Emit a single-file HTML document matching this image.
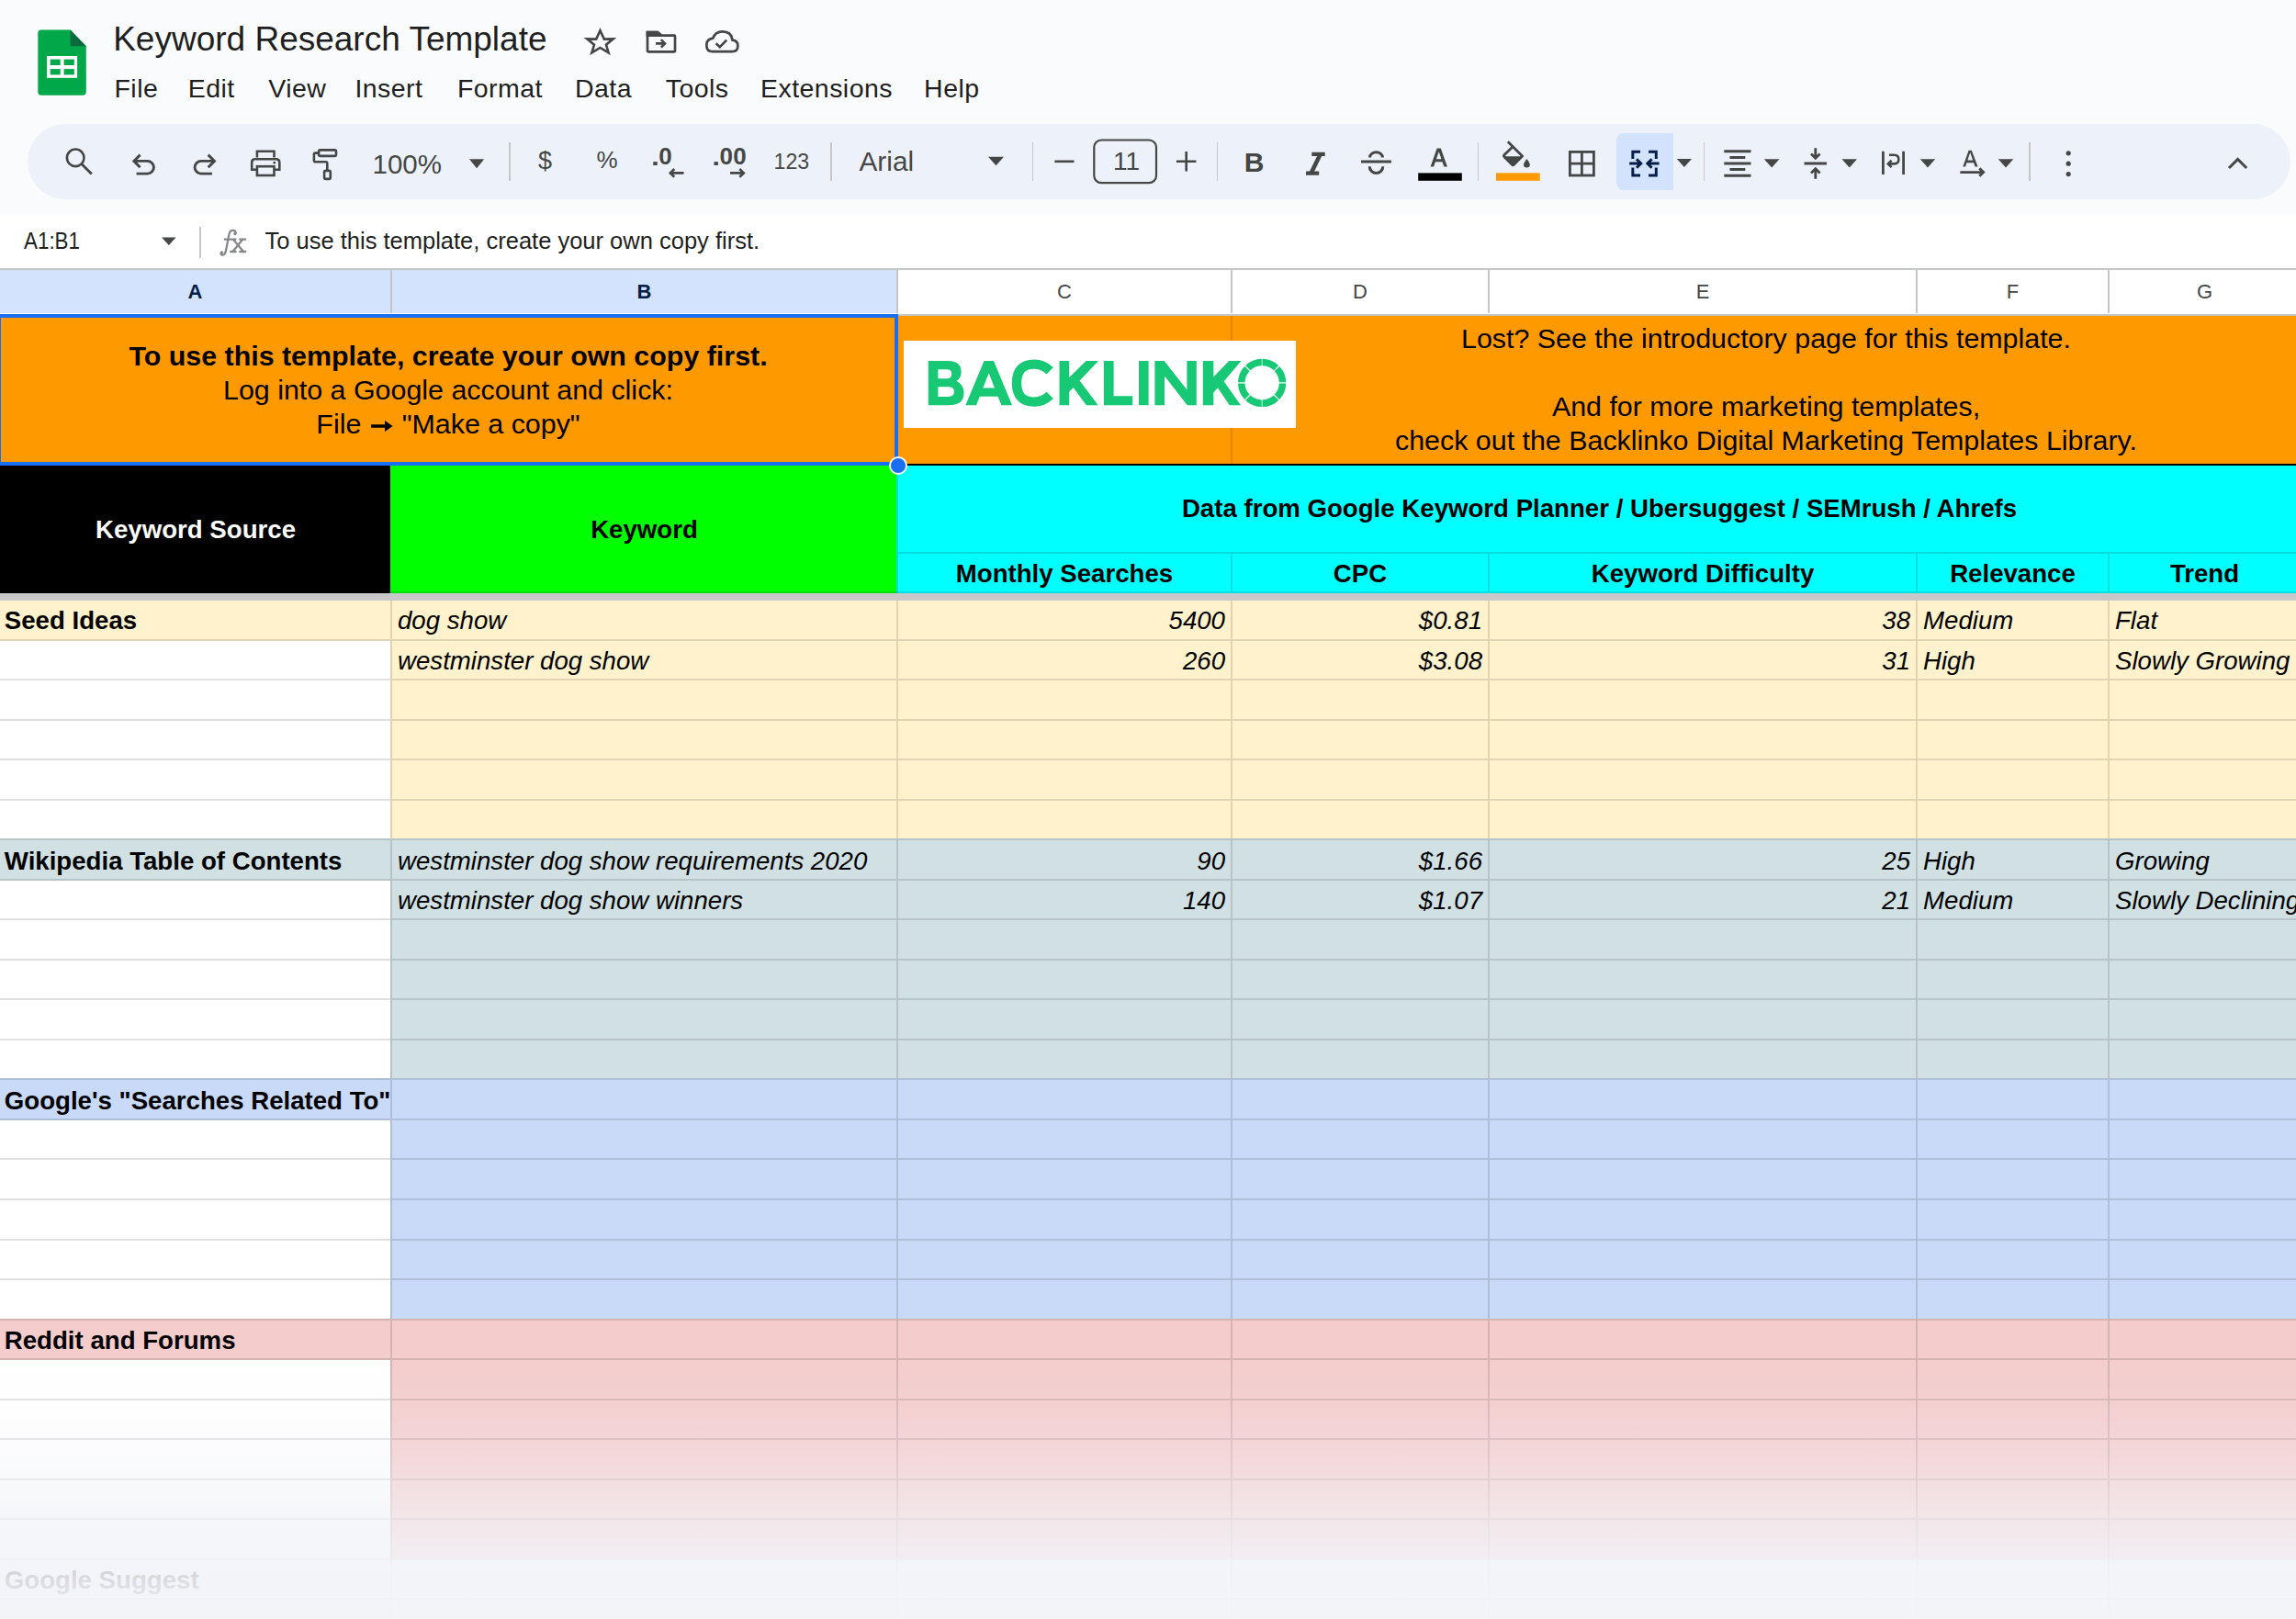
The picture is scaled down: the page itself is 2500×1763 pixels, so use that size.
<!DOCTYPE html>
<html><head><meta charset="utf-8"><title>Keyword Research Template</title>
<style>
html,body{margin:0;padding:0;}
body{width:2500px;height:1763px;overflow:hidden;position:relative;background:#ffffff;font-family:"Liberation Sans", sans-serif;}
body>div,body>svg{position:absolute;}
.t{white-space:nowrap;}
</style></head><body>
<div style="left:0px;top:0px;width:2500px;height:234px;background:#f9fbfd"></div><div style="left:30px;top:135px;width:2464px;height:82px;background:#edf2fa;border-radius:41px"></div><div style="left:0px;top:234px;width:2500px;height:59px;background:#ffffff"></div><svg style="position:absolute;left:0;top:0" width="2500" height="300" viewBox="0 0 2500 300">
<path d="M45 32.6 H76.5 L93.8 50.2 V100 Q93.8 103.7 90 103.7 H45 Q41.3 103.7 41.3 100 V36.3 Q41.3 32.6 45 32.6 Z" fill="#00a84a"/>
<path d="M76.5 32.6 L93.8 50.2 H76.5 Z" fill="#0a6b3d"/>
<rect x="51" y="61" width="33.1" height="23.8" fill="#fff"/>
<rect x="54.7" y="64.6" width="11" height="6.4" fill="#00a84a"/>
<rect x="69.6" y="64.6" width="11.2" height="6.4" fill="#00a84a"/>
<rect x="54.7" y="75.1" width="11" height="6.3" fill="#00a84a"/>
<rect x="69.6" y="75.1" width="11.2" height="6.3" fill="#00a84a"/>
</svg><div class="t" style="left:123.20px;top:21.60px;font-size:37px;line-height:42.55px;color:#1f1f1f">Keyword Research Template</div><div class="t" style="left:124.52px;top:79.94px;font-size:28.5px;line-height:32.77px;color:#1f1f1f;letter-spacing:0.45px">File</div><div class="t" style="left:204.72px;top:79.94px;font-size:28.5px;line-height:32.77px;color:#1f1f1f;letter-spacing:0.45px">Edit</div><div class="t" style="left:292.30px;top:79.94px;font-size:28.5px;line-height:32.77px;color:#1f1f1f;letter-spacing:0.45px">View</div><div class="t" style="left:386.44px;top:79.94px;font-size:28.5px;line-height:32.77px;color:#1f1f1f;letter-spacing:0.45px">Insert</div><div class="t" style="left:497.92px;top:79.94px;font-size:28.5px;line-height:32.77px;color:#1f1f1f;letter-spacing:0.45px">Format</div><div class="t" style="left:626.02px;top:79.94px;font-size:28.5px;line-height:32.77px;color:#1f1f1f;letter-spacing:0.45px">Data</div><div class="t" style="left:724.73px;top:79.94px;font-size:28.5px;line-height:32.77px;color:#1f1f1f;letter-spacing:0.45px">Tools</div><div class="t" style="left:828.02px;top:79.94px;font-size:28.5px;line-height:32.77px;color:#1f1f1f;letter-spacing:0.45px">Extensions</div><div class="t" style="left:1006.12px;top:79.94px;font-size:28.5px;line-height:32.77px;color:#1f1f1f;letter-spacing:0.45px">Help</div><svg style="position:absolute;left:0;top:0" width="1100" height="120" viewBox="0 0 1100 120" fill="none" stroke="#444746" stroke-width="2.7" stroke-linejoin="miter">
<path d="M653.50 33.18 L657.82 42.63 L667.63 42.36 L659.98 48.66 L662.59 57.30 L653.50 51.90 L644.41 57.30 L647.02 48.66 L639.37 42.36 L649.18 42.63 Z" stroke-width="2.6"/>
<path d="M705 35 H716 L720 38.6 H734.9 Q735 38.6 735 40 V55 Q735 56.3 733.6 56.3 H706.4 Q705 56.3 705 55 Z"/>
<path d="M705 35 H716 L720 38.6 H705 Z" fill="#444746"/>
<path d="M714 47.4 H723.5 M719.8 43.2 L724 47.4 L719.8 51.6" stroke-width="2.6"/>
<path d="M776 56.2 H797 Q803.4 56.2 803.4 50 Q803.4 44.2 797.5 43.6 Q796.5 34.4 786.5 34.4 Q779 34.4 776.3 41.6 Q769.3 42.5 769.3 49.2 Q769.3 56.2 776 56.2 Z"/>
<path d="M779.6 47.2 L783.8 51.2 L791.2 43.6" stroke-width="2.7"/>
</svg><svg style="position:absolute;left:0;top:0" width="2500" height="234" viewBox="0 0 2500 234" fill="none" stroke="#444746" stroke-width="2.6">
<circle cx="82.2" cy="171.8" r="9.3"/>
<path d="M88.8 178.5 L99.8 189.6" stroke-width="2.9"/>
<path d="M148.6 189.1 H160.6 A6.85 6.85 0 0 0 160.6 175.4 H146.5" stroke-width="2.9"/>
<path d="M152.6 168.6 L145.8 175.4 L152.6 182.2" stroke-width="2.9"/>
<path d="M230.9 189.1 H218.9 A6.85 6.85 0 0 1 218.9 175.4 H233" stroke-width="2.9"/>
<path d="M226.7 168.6 L233.5 175.4 L226.7 182.2" stroke-width="2.9"/>
<path d="M279.9 171.5 V164.8 H298.5 V171.5"/>
<path d="M279.9 184.8 H274.2 V177 Q274.2 173.3 277.9 173.3 H300.6 Q304.3 173.3 304.3 177 V184.8 H298.5"/>
<rect x="279.9" y="181.2" width="18.6" height="9.8"/>
<circle cx="298.8" cy="177.2" r="1.4" fill="#444746" stroke="none"/>
<rect x="347.1" y="163.4" width="18.9" height="6.5" rx="1.6"/>
<path d="M347 166.6 H343.4 Q341.9 166.6 341.9 168.1 V174.7 Q341.9 176.2 343.4 176.2 H354.7 Q356.3 176.2 356.3 177.8 V185.5"/>
<rect x="353.1" y="185.9" width="6.7" height="9" rx="1.6"/>
<path d="M511 173.2 H527.2 L519.1 183.2 Z" fill="#444746" stroke="none"/>
<path d="M1076 170.8 H1093 L1084.5 180.3 Z" fill="#444746" stroke="none"/>
<path d="M1148.4 175.8 H1169.5"/>
<rect x="1191.3" y="152.5" width="67.7" height="46.7" rx="8" stroke-width="2.2"/>
<path d="M1281 175.8 H1302.4 M1291.7 165 V186.6"/>
<path d="M1825.8 173 H1842 L1833.9 182 Z" fill="#444746" stroke="none"/>
<path d="M1920.8 173.2 H1937.5 L1929.15 182.4 Z" fill="#444746" stroke="none"/>
<path d="M2005.5 173.2 H2022 L2013.75 182.4 Z" fill="#444746" stroke="none"/>
<path d="M2090.8 173.2 H2107.2 L2099 182.4 Z" fill="#444746" stroke="none"/>
<path d="M2175.8 173.2 H2192.3 L2184 182.4 Z" fill="#444746" stroke="none"/>
<path d="M2427 183 L2436.6 173.4 L2446.2 183" stroke-width="2.9"/>
<circle cx="2252.2" cy="166.8" r="2.6" fill="#444746" stroke="none"/>
<circle cx="2252.2" cy="178.2" r="2.6" fill="#444746" stroke="none"/>
<circle cx="2252.2" cy="189.6" r="2.6" fill="#444746" stroke="none"/>
</svg><div style="left:554.25px;top:155.4px;width:1.5px;height:41.4px;background:#c7c7c7"></div><div style="left:904.15px;top:155.4px;width:1.5px;height:41.4px;background:#c7c7c7"></div><div style="left:1123.85px;top:155.4px;width:1.5px;height:41.4px;background:#c7c7c7"></div><div style="left:1324.95px;top:155.4px;width:1.5px;height:41.4px;background:#c7c7c7"></div><div style="left:1608.65px;top:155.4px;width:1.5px;height:41.4px;background:#c7c7c7"></div><div style="left:1854.85px;top:155.4px;width:1.5px;height:41.4px;background:#c7c7c7"></div><div style="left:2209.05px;top:155.4px;width:1.5px;height:41.4px;background:#c7c7c7"></div><div class="t" style="left:405.50px;top:161.72px;font-size:29.5px;line-height:33.92px;color:#444746">100%</div><div class="t" style="left:586.00px;top:160.12px;font-size:27px;line-height:31.05px;color:#444746">$</div><div class="t" style="left:649.50px;top:160.44px;font-size:26px;line-height:29.90px;color:#444746">%</div><div class="t" style="left:935.50px;top:159.14px;font-size:29.8px;line-height:34.27px;color:#444746">Arial</div><div class="t" style="left:1212.00px;top:160.40px;font-size:28px;line-height:32.20px;color:#444746">11</div><div class="t" style="left:842.50px;top:163.02px;font-size:23.2px;line-height:26.68px;color:#444746">123</div><svg style="position:absolute;left:0;top:0" width="2500" height="234" viewBox="0 0 2500 234" fill="none" stroke="#444746" stroke-width="2.6">
<rect x="711.3" y="176.1" width="4.4" height="3.9" fill="#444746" stroke="none"/>
<rect x="777.5" y="176.1" width="4.4" height="3.9" fill="#444746" stroke="none"/>
<path d="M744.5 188.4 H730 M734.3 184 L729.8 188.4 L734.3 192.8" />
<path d="M795 188.4 H809.5 M805.3 184 L809.8 188.4 L805.3 192.8" />
</svg><div class="t" style="left:717.20px;top:156.04px;font-size:26px;line-height:29.90px;color:#444746;font-weight:bold">0</div><div class="t" style="left:783.40px;top:156.04px;font-size:26px;line-height:29.90px;color:#444746;font-weight:bold;letter-spacing:0.3px">00</div><div class="t" style="left:1354.80px;top:160.16px;font-size:30px;line-height:34.50px;color:#444746;font-weight:bold">B</div><svg style="position:absolute;left:0;top:0" width="2500" height="234" viewBox="0 0 2500 234" fill="none" stroke="#444746" stroke-width="2.8">
<path d="M1428.3 167.9 H1442.7 M1422 188.6 H1436.2" stroke-width="4.2"/>
<path d="M1437.6 168 L1427.6 188.5" stroke-width="4.6"/>
<path d="M1482 176.1 H1514.9" stroke-width="3"/>
<path d="M1491.6 171.4 A6.9 5.6 0 0 1 1505.4 171.4" stroke-width="3"/>
<path d="M1491.2 181.2 A7.3 7.3 0 0 0 1505.8 181.2" stroke-width="3"/>
<path d="M1557.6 181.6 L1564.6 161.5 H1568.8 L1575.9 181.6 H1572.3 L1570.5 176.3 H1562.9 L1561.1 181.6 Z M1563.9 173.3 H1569.5 L1566.7 165.3 Z" fill="#444746" fill-rule="evenodd" stroke="none"/>
<rect x="1544.2" y="188.4" width="47.6" height="8.4" fill="#000" stroke="none"/>
<path d="M1641.8 154.2 L1657.6 170 L1648.4 179.2 Q1647.4 180.2 1646.4 179.2 L1637.9 170.7 Q1636.9 169.7 1637.9 168.7 L1647.4 159.6" stroke-width="2.8" stroke-linejoin="round"/>
<path d="M1638.2 170.2 H1657 L1647.4 179.6 Z" fill="#444746" stroke="none"/>
<path d="M1662.4 173 Q1659 177.4 1659 179.2 Q1659 182.4 1662.4 182.4 Q1665.8 182.4 1665.8 179.2 Q1665.8 177.4 1662.4 173 Z" fill="#444746" stroke="none"/>
<rect x="1629" y="188.4" width="47.7" height="8.4" fill="#ff9900" stroke="none"/>
<rect x="1709.4" y="165.4" width="26" height="25.6"/>
<path d="M1722.4 165.4 V191 M1709.4 178.2 H1735.4"/>
</svg><div style="left:1759.6px;top:145.4px;width:62.1px;height:61.6px;background:#d3e3fd;border-radius:8px 0 0 8px"></div><svg style="position:absolute;left:0;top:0" width="2500" height="234" viewBox="0 0 2500 234" fill="none" stroke="#041e49" stroke-width="2.8">
<path d="M1786 165.25 H1777.85 V173.1 M1777.85 182.4 V191.05 H1786" stroke-width="3"/>
<path d="M1795.1 165.25 H1803.3 V173.1 M1803.3 182.4 V191.05 H1795.1" stroke-width="3"/>
<path d="M1774.2 178 H1786 M1782 173.3 L1786.7 178 L1782 182.7" stroke-width="3"/>
<path d="M1806.6 178 H1794.3 M1798.6 173.3 L1793.9 178 L1798.6 182.7" stroke-width="3"/>
</svg><svg style="position:absolute;left:0;top:0" width="2500" height="234" viewBox="0 0 2500 234" fill="none" stroke="#444746" stroke-width="2.8">
<path d="M1877.3 164.8 H1906.5 M1883.5 171.4 H1900.3 M1877.3 178 H1906.5 M1883.5 184.6 H1900.3 M1877.3 191.2 H1906.5" stroke-width="3"/>
<path d="M1964.5 178 H1989 M1976.8 161.2 V172 M1972 167.5 L1976.8 172.3 L1981.6 167.5 M1976.8 194.7 V184 M1972 188.5 L1976.8 183.7 L1981.6 188.5"/>
<path d="M2050.4 164.8 V190 M2072.6 164.8 V190"/>
<path d="M2057 168.8 H2062.5 Q2067.4 168.8 2067.4 173.6 Q2067.4 178.4 2062.5 178.4 H2056.2 M2059.6 174.6 L2055.8 178.4 L2059.6 182.2" stroke-width="2.6"/>
<path d="M2137.3 181.6 L2143.6 163.7 H2146.8 L2153.6 181.6 H2150.6 L2149.1 177.2 H2141.5 L2140 181.6 Z M2142.4 174.6 H2148.2 L2145.2 166 Z" fill="#444746" fill-rule="evenodd" stroke="none"/>
<path d="M2134.4 187.6 H2159.5 M2155.3 183.4 L2159.6 187.6 L2155.3 191.8" stroke-width="2.9"/>
</svg><div class="t" style="left:25.50px;top:247.18px;font-size:26.5px;line-height:30.47px;color:#1f1f1f;transform:scaleX(0.845);transform-origin:0 0">A1:B1</div><svg style="position:absolute;left:0;top:0" width="400" height="300" viewBox="0 0 400 300">
<path d="M176 258.5 H191.6 L183.8 267 Z" fill="#444746"/>
</svg><div style="left:217px;top:246.8px;width:1.6px;height:34.2px;background:#c7c7c7"></div><svg style="position:absolute;left:0;top:0" width="400" height="300" viewBox="0 0 400 300" fill="none" stroke="#858789" stroke-width="2.3">
<path d="M256.4 254.3 Q257.2 250.9 253.4 250.9 Q250.2 250.9 249.3 255.6 L245.9 273.2 Q245 277.7 242.2 277.7 Q240 277.7 240.9 275.2"/>
<circle cx="256" cy="254.5" r="1.7" fill="#858789" stroke="none"/>
<circle cx="241.4" cy="275" r="1.7" fill="#858789" stroke="none"/>
<path d="M243.8 260.6 H257.4 M260.4 260.6 H268.1 M250.3 274 H257.6 M260.4 274 H268.1 M254.2 261 L264.9 273.8 M264 261 L253.6 273.8"/>
</svg><div class="t" style="left:288.50px;top:248.10px;font-size:25.5px;line-height:29.32px;color:#1f1f1f">To use this template, create your own copy first.</div><div style="left:0px;top:292px;width:2500px;height:1.7px;background:#c4c7c5"></div><div style="left:0px;top:293.7px;width:976px;height:47.8px;background:#d3e3fd"></div><div style="left:976px;top:293.7px;width:1524px;height:47.8px;background:#ffffff"></div><div style="left:425px;top:293.7px;width:2px;height:47.8px;background:#c4c7c5"></div><div style="left:976px;top:293.7px;width:2px;height:47.8px;background:#c4c7c5"></div><div style="left:1340px;top:293.7px;width:2px;height:47.8px;background:#c4c7c5"></div><div style="left:1620px;top:293.7px;width:2px;height:47.8px;background:#c4c7c5"></div><div style="left:2086px;top:293.7px;width:2px;height:47.8px;background:#c4c7c5"></div><div style="left:2295px;top:293.7px;width:2px;height:47.8px;background:#c4c7c5"></div><div style="left:976px;top:341.5px;width:1524px;height:2px;background:#c4c7c5"></div><div class="t" style="left:-787.50px;width:2000px;top:304.73px;font-size:22px;line-height:25.30px;text-align:center;color:#041e49;font-weight:bold">A</div><div class="t" style="left:-298.50px;width:2000px;top:304.73px;font-size:22px;line-height:25.30px;text-align:center;color:#041e49;font-weight:bold">B</div><div class="t" style="left:159.00px;width:2000px;top:304.73px;font-size:22px;line-height:25.30px;text-align:center;color:#444746">C</div><div class="t" style="left:481.00px;width:2000px;top:304.73px;font-size:22px;line-height:25.30px;text-align:center;color:#444746">D</div><div class="t" style="left:854.00px;width:2000px;top:304.73px;font-size:22px;line-height:25.30px;text-align:center;color:#444746">E</div><div class="t" style="left:1191.50px;width:2000px;top:304.73px;font-size:22px;line-height:25.30px;text-align:center;color:#444746">F</div><div class="t" style="left:1400.50px;width:2000px;top:304.73px;font-size:22px;line-height:25.30px;text-align:center;color:#444746">G</div><div style="left:0px;top:343.5px;width:2500px;height:161.5px;background:#ff9900"></div><div style="left:976px;top:343.5px;width:1524px;height:0px;"></div><div style="left:1340px;top:343.5px;width:2px;height:161.5px;background:rgba(0,0,0,0.12)"></div><div style="left:976px;top:505px;width:1524px;height:2px;background:#000000"></div><div style="left:984px;top:370.5px;width:427px;height:95.5px;background:#ffffff"></div><svg style="position:absolute;left:0;top:0" width="2500" height="520" viewBox="0 0 2500 520">
<g fill="#17c874" fill-rule="evenodd">
<path d="M1010.8 393 H1032 Q1046.6 393 1046.6 405.2 Q1046.6 411.8 1041.5 415 Q1049.5 418.6 1049.5 428 Q1049.5 441.2 1033.5 441.2 H1010.8 Z M1021.4 402.3 V412.2 H1031 Q1036.3 412.2 1036.3 407.2 Q1036.3 402.3 1031 402.3 Z M1021.4 421.3 V432 H1032.5 Q1039 432 1039 426.6 Q1039 421.3 1032.5 421.3 Z"/>
<path d="M1051.4 441.2 L1071.5 393 H1082 L1102 441.2 H1090.4 L1086.6 431.8 H1066.8 L1063 441.2 Z M1070.3 422.5 H1083 L1076.7 406.3 Z"/>
<path d="M1153.5 393 H1164.2 V411 L1182.6 393 H1196 L1175.6 414.5 L1195.6 441.2 H1182.8 L1168.7 422 L1164.2 426.6 V441.2 H1153.5 Z"/>
<path d="M1201.9 393 H1212.6 V431.2 H1233.2 V441.2 H1201.9 Z"/>
<path d="M1240 393 H1250.6 V441.2 H1240 Z"/>
<path d="M1257.4 393 H1267.6 L1292.4 424.6 V393 H1302.8 V441.2 H1292.8 L1268 409.4 V441.2 H1257.4 Z"/>
<path d="M1309.8 393 H1321.3 V410.5 L1338.3 393 H1351.5 L1332.6 415.2 L1351 441.2 H1338.8 L1325.9 422.2 L1321.3 427.5 V441.2 H1309.8 Z"/>
</g>
<path d="M1143.2 403.8 Q1136 396.6 1126 396.6 Q1107 396.6 1107 417.1 Q1107 437.6 1126 437.6 Q1136 437.6 1143.2 430.4" fill="none" stroke="#17c874" stroke-width="10.4"/>
<circle cx="1374.15" cy="416.9" r="22.4" fill="none" stroke="#17c874" stroke-width="7.5"/>
<path d="M1391.15 416.90 L1401.65 416.90" stroke="#fff" stroke-opacity="0.95" stroke-width="1.3"/><path d="M1386.17 428.92 L1393.60 436.35" stroke="#fff" stroke-opacity="0.95" stroke-width="1.3"/><path d="M1374.15 433.90 L1374.15 444.40" stroke="#fff" stroke-opacity="0.55" stroke-width="1.3"/><path d="M1362.13 428.92 L1354.70 436.35" stroke="#fff" stroke-opacity="0.95" stroke-width="1.3"/><path d="M1357.15 416.90 L1346.65 416.90" stroke="#fff" stroke-opacity="0.95" stroke-width="1.3"/><path d="M1362.13 404.88 L1354.70 397.45" stroke="#fff" stroke-opacity="0.95" stroke-width="1.3"/><path d="M1374.15 399.90 L1374.15 389.40" stroke="#fff" stroke-opacity="0.55" stroke-width="1.3"/><path d="M1386.17 404.88 L1393.60 397.45" stroke="#fff" stroke-opacity="0.95" stroke-width="1.3"/>
</svg><div class="t" style="left:-512px;width:2000px;top:368.6px;font-size:30.4px;line-height:37px;text-align:center;"><b>To use this template, create your own copy first.</b><br>Log into a Google account and click:<br>File <span style="display:inline-block;width:36px;padding-left:2px;box-sizing:border-box;text-align:left"><svg width="24" height="14" viewBox="0 0 24 14" style="vertical-align:1px"><path d="M0 5.2 H15 V1 L23.6 7 L15 13 V8.8 H0 Z" fill="#000"/></svg></span>"Make a copy"</div><div class="t" style="left:923px;width:2000px;top:350.3px;font-size:30.4px;line-height:37px;text-align:center;">Lost? See the introductory page for this template.<br>&nbsp;<br>And for more marketing templates,<br>check out the Backlinko Digital Marketing Templates Library.</div><div style="left:976px;top:507px;width:1524px;height:139px;background:#00ffff"></div><div style="left:978px;top:600.6px;width:1522px;height:2px;background:rgba(0,0,0,0.12)"></div><div style="left:1340px;top:602.6px;width:2px;height:41.4px;background:rgba(0,0,0,0.12)"></div><div style="left:1620px;top:602.6px;width:2px;height:41.4px;background:rgba(0,0,0,0.12)"></div><div style="left:2086px;top:602.6px;width:2px;height:41.4px;background:rgba(0,0,0,0.12)"></div><div style="left:2295px;top:602.6px;width:2px;height:41.4px;background:rgba(0,0,0,0.12)"></div><div style="left:976px;top:507px;width:2px;height:139px;background:rgba(0,0,0,0.12)"></div><div style="left:976px;top:644px;width:1524px;height:2px;background:rgba(0,0,0,0.12)"></div><div style="left:0px;top:507px;width:425px;height:139px;background:#000000"></div><div style="left:425px;top:507px;width:551px;height:139px;background:#00ff00"></div><div style="left:425px;top:644px;width:551px;height:2px;background:rgba(0,0,0,0.12)"></div><div class="t" style="left:-787.00px;width:2000px;top:560.73px;font-size:27.64px;line-height:31.79px;text-align:center;color:#ffffff;font-weight:bold">Keyword Source</div><div class="t" style="left:-298.50px;width:2000px;top:560.73px;font-size:27.64px;line-height:31.79px;text-align:center;color:#000;font-weight:bold">Keyword</div><div class="t" style="left:741.50px;width:2000px;top:537.73px;font-size:27.64px;line-height:31.79px;text-align:center;color:#000;font-weight:bold">Data from Google Keyword Planner / Ubersuggest / SEMrush / Ahrefs</div><div class="t" style="left:159.00px;width:2000px;top:609.03px;font-size:27.64px;line-height:31.79px;text-align:center;color:#000;font-weight:bold">Monthly Searches</div><div class="t" style="left:481.00px;width:2000px;top:609.03px;font-size:27.64px;line-height:31.79px;text-align:center;color:#000;font-weight:bold">CPC</div><div class="t" style="left:854.00px;width:2000px;top:609.03px;font-size:27.64px;line-height:31.79px;text-align:center;color:#000;font-weight:bold">Keyword Difficulty</div><div class="t" style="left:1191.50px;width:2000px;top:609.03px;font-size:27.64px;line-height:31.79px;text-align:center;color:#000;font-weight:bold">Relevance</div><div class="t" style="left:1400.50px;width:2000px;top:609.03px;font-size:27.64px;line-height:31.79px;text-align:center;color:#000;font-weight:bold">Trend</div><div style="left:0px;top:646px;width:2500px;height:8px;background:#c8c8c8"></div><div style="left:425px;top:654px;width:2075px;height:41.60000000000002px;background:#fff2cc"></div><div style="left:0px;top:654px;width:425px;height:43.60000000000002px;background:#fff2cc"></div><div style="left:425px;top:695.6px;width:2075px;height:43.52999999999997px;background:#fff2cc"></div><div style="left:0px;top:697.6px;width:425px;height:41.52999999999997px;background:#ffffff"></div><div style="left:425px;top:739.13px;width:2075px;height:43.530000000000086px;background:#fff2cc"></div><div style="left:0px;top:739.13px;width:425px;height:43.530000000000086px;background:#ffffff"></div><div style="left:425px;top:782.6600000000001px;width:2075px;height:43.52999999999997px;background:#fff2cc"></div><div style="left:0px;top:782.6600000000001px;width:425px;height:43.52999999999997px;background:#ffffff"></div><div style="left:425px;top:826.19px;width:2075px;height:43.52999999999997px;background:#fff2cc"></div><div style="left:0px;top:826.19px;width:425px;height:43.52999999999997px;background:#ffffff"></div><div style="left:425px;top:869.72px;width:2075px;height:43.52999999999997px;background:#fff2cc"></div><div style="left:0px;top:869.72px;width:425px;height:43.52999999999997px;background:#ffffff"></div><div style="left:425px;top:913.25px;width:2075px;height:43.52999999999997px;background:#d0e0e3"></div><div style="left:0px;top:913.25px;width:425px;height:45.52999999999997px;background:#d0e0e3"></div><div style="left:425px;top:956.78px;width:2075px;height:43.530000000000086px;background:#d0e0e3"></div><div style="left:0px;top:958.78px;width:425px;height:41.530000000000086px;background:#ffffff"></div><div style="left:425px;top:1000.3100000000001px;width:2075px;height:43.530000000000086px;background:#d0e0e3"></div><div style="left:0px;top:1000.3100000000001px;width:425px;height:43.530000000000086px;background:#ffffff"></div><div style="left:425px;top:1043.8400000000001px;width:2075px;height:43.529999999999745px;background:#d0e0e3"></div><div style="left:0px;top:1043.8400000000001px;width:425px;height:43.529999999999745px;background:#ffffff"></div><div style="left:425px;top:1087.37px;width:2075px;height:43.5300000000002px;background:#d0e0e3"></div><div style="left:0px;top:1087.37px;width:425px;height:43.5300000000002px;background:#ffffff"></div><div style="left:425px;top:1130.9px;width:2075px;height:43.52999999999997px;background:#d0e0e3"></div><div style="left:0px;top:1130.9px;width:425px;height:43.52999999999997px;background:#ffffff"></div><div style="left:425px;top:1174.43px;width:2075px;height:43.52999999999997px;background:#c9daf8"></div><div style="left:0px;top:1174.43px;width:425px;height:45.52999999999997px;background:#c9daf8"></div><div style="left:425px;top:1217.96px;width:2075px;height:43.52999999999997px;background:#c9daf8"></div><div style="left:0px;top:1219.96px;width:425px;height:41.52999999999997px;background:#ffffff"></div><div style="left:425px;top:1261.49px;width:2075px;height:43.52999999999997px;background:#c9daf8"></div><div style="left:0px;top:1261.49px;width:425px;height:43.52999999999997px;background:#ffffff"></div><div style="left:425px;top:1305.02px;width:2075px;height:43.5300000000002px;background:#c9daf8"></div><div style="left:0px;top:1305.02px;width:425px;height:43.5300000000002px;background:#ffffff"></div><div style="left:425px;top:1348.5500000000002px;width:2075px;height:43.529999999999745px;background:#c9daf8"></div><div style="left:0px;top:1348.5500000000002px;width:425px;height:43.529999999999745px;background:#ffffff"></div><div style="left:425px;top:1392.08px;width:2075px;height:43.5300000000002px;background:#c9daf8"></div><div style="left:0px;top:1392.08px;width:425px;height:43.5300000000002px;background:#ffffff"></div><div style="left:425px;top:1435.6100000000001px;width:2075px;height:43.529999999999745px;background:#f4cccc"></div><div style="left:0px;top:1435.6100000000001px;width:425px;height:45.529999999999745px;background:#f4cccc"></div><div style="left:425px;top:1479.1399999999999px;width:2075px;height:43.5300000000002px;background:#f4cccc"></div><div style="left:0px;top:1481.1399999999999px;width:425px;height:41.5300000000002px;background:#ffffff"></div><div style="left:425px;top:1522.67px;width:2075px;height:43.52999999999997px;background:#f4cccc"></div><div style="left:0px;top:1522.67px;width:425px;height:43.52999999999997px;background:#ffffff"></div><div style="left:425px;top:1566.2px;width:2075px;height:43.52999999999997px;background:#f4cccc"></div><div style="left:0px;top:1566.2px;width:425px;height:43.52999999999997px;background:#ffffff"></div><div style="left:425px;top:1609.73px;width:2075px;height:43.5300000000002px;background:#f4cccc"></div><div style="left:0px;top:1609.73px;width:425px;height:43.5300000000002px;background:#ffffff"></div><div style="left:425px;top:1653.2600000000002px;width:2075px;height:43.529999999999745px;background:#f4cccc"></div><div style="left:0px;top:1653.2600000000002px;width:425px;height:43.529999999999745px;background:#ffffff"></div><div style="left:0px;top:1696.79px;width:2500px;height:43.5300000000002px;background:#ffffff"></div><div style="left:0px;top:1740.3200000000002px;width:2500px;height:22.679999999999836px;background:#ffffff"></div><div style="left:0px;top:695.6px;width:2500px;height:2px;background:rgba(0,0,0,0.12)"></div><div style="left:0px;top:739.13px;width:2500px;height:2px;background:rgba(0,0,0,0.12)"></div><div style="left:0px;top:782.6600000000001px;width:2500px;height:2px;background:rgba(0,0,0,0.12)"></div><div style="left:0px;top:826.19px;width:2500px;height:2px;background:rgba(0,0,0,0.12)"></div><div style="left:0px;top:869.72px;width:2500px;height:2px;background:rgba(0,0,0,0.12)"></div><div style="left:0px;top:913.25px;width:2500px;height:2px;background:rgba(0,0,0,0.12)"></div><div style="left:0px;top:956.78px;width:2500px;height:2px;background:rgba(0,0,0,0.12)"></div><div style="left:0px;top:1000.3100000000001px;width:2500px;height:2px;background:rgba(0,0,0,0.12)"></div><div style="left:0px;top:1043.8400000000001px;width:2500px;height:2px;background:rgba(0,0,0,0.12)"></div><div style="left:0px;top:1087.37px;width:2500px;height:2px;background:rgba(0,0,0,0.12)"></div><div style="left:0px;top:1130.9px;width:2500px;height:2px;background:rgba(0,0,0,0.12)"></div><div style="left:0px;top:1174.43px;width:2500px;height:2px;background:rgba(0,0,0,0.12)"></div><div style="left:0px;top:1217.96px;width:2500px;height:2px;background:rgba(0,0,0,0.12)"></div><div style="left:0px;top:1261.49px;width:2500px;height:2px;background:rgba(0,0,0,0.12)"></div><div style="left:0px;top:1305.02px;width:2500px;height:2px;background:rgba(0,0,0,0.12)"></div><div style="left:0px;top:1348.5500000000002px;width:2500px;height:2px;background:rgba(0,0,0,0.12)"></div><div style="left:0px;top:1392.08px;width:2500px;height:2px;background:rgba(0,0,0,0.12)"></div><div style="left:0px;top:1435.6100000000001px;width:2500px;height:2px;background:rgba(0,0,0,0.12)"></div><div style="left:0px;top:1479.1399999999999px;width:2500px;height:2px;background:rgba(0,0,0,0.12)"></div><div style="left:0px;top:1522.67px;width:2500px;height:2px;background:rgba(0,0,0,0.12)"></div><div style="left:0px;top:1566.2px;width:2500px;height:2px;background:rgba(0,0,0,0.12)"></div><div style="left:0px;top:1609.73px;width:2500px;height:2px;background:rgba(0,0,0,0.12)"></div><div style="left:0px;top:1653.2600000000002px;width:2500px;height:2px;background:rgba(0,0,0,0.12)"></div><div style="left:0px;top:1696.79px;width:2500px;height:2px;background:rgba(0,0,0,0.12)"></div><div style="left:0px;top:1740.3200000000002px;width:2500px;height:2px;background:rgba(0,0,0,0.12)"></div><div style="left:425px;top:654px;width:2px;height:41.60000000000002px;background:rgba(0,0,0,0.12)"></div><div style="left:425px;top:697.6px;width:2px;height:41.52999999999997px;background:rgba(0,0,0,0.12)"></div><div style="left:425px;top:741.13px;width:2px;height:41.530000000000086px;background:rgba(0,0,0,0.12)"></div><div style="left:425px;top:784.6600000000001px;width:2px;height:41.52999999999997px;background:rgba(0,0,0,0.12)"></div><div style="left:425px;top:828.19px;width:2px;height:41.52999999999997px;background:rgba(0,0,0,0.12)"></div><div style="left:425px;top:871.72px;width:2px;height:41.52999999999997px;background:rgba(0,0,0,0.12)"></div><div style="left:425px;top:915.25px;width:2px;height:41.52999999999997px;background:rgba(0,0,0,0.12)"></div><div style="left:425px;top:958.78px;width:2px;height:41.530000000000086px;background:rgba(0,0,0,0.12)"></div><div style="left:425px;top:1002.3100000000001px;width:2px;height:41.530000000000086px;background:rgba(0,0,0,0.12)"></div><div style="left:425px;top:1045.8400000000001px;width:2px;height:41.529999999999745px;background:rgba(0,0,0,0.12)"></div><div style="left:425px;top:1089.37px;width:2px;height:41.5300000000002px;background:rgba(0,0,0,0.12)"></div><div style="left:425px;top:1132.9px;width:2px;height:41.52999999999997px;background:rgba(0,0,0,0.12)"></div><div style="left:425px;top:1176.43px;width:2px;height:41.52999999999997px;background:rgba(0,0,0,0.12)"></div><div style="left:425px;top:1219.96px;width:2px;height:41.52999999999997px;background:rgba(0,0,0,0.12)"></div><div style="left:425px;top:1263.49px;width:2px;height:41.52999999999997px;background:rgba(0,0,0,0.12)"></div><div style="left:425px;top:1307.02px;width:2px;height:41.5300000000002px;background:rgba(0,0,0,0.12)"></div><div style="left:425px;top:1350.5500000000002px;width:2px;height:41.529999999999745px;background:rgba(0,0,0,0.12)"></div><div style="left:425px;top:1394.08px;width:2px;height:41.5300000000002px;background:rgba(0,0,0,0.12)"></div><div style="left:425px;top:1437.6100000000001px;width:2px;height:41.529999999999745px;background:rgba(0,0,0,0.12)"></div><div style="left:425px;top:1481.1399999999999px;width:2px;height:41.5300000000002px;background:rgba(0,0,0,0.12)"></div><div style="left:425px;top:1524.67px;width:2px;height:41.52999999999997px;background:rgba(0,0,0,0.12)"></div><div style="left:425px;top:1568.2px;width:2px;height:41.52999999999997px;background:rgba(0,0,0,0.12)"></div><div style="left:425px;top:1611.73px;width:2px;height:41.5300000000002px;background:rgba(0,0,0,0.12)"></div><div style="left:425px;top:1655.2600000000002px;width:2px;height:41.529999999999745px;background:rgba(0,0,0,0.12)"></div><div style="left:425px;top:1698.79px;width:2px;height:41.5300000000002px;background:rgba(0,0,0,0.12)"></div><div style="left:425px;top:1742.3200000000002px;width:2px;height:20.679999999999836px;background:rgba(0,0,0,0.12)"></div><div style="left:976px;top:654px;width:2px;height:41.60000000000002px;background:rgba(0,0,0,0.12)"></div><div style="left:976px;top:697.6px;width:2px;height:41.52999999999997px;background:rgba(0,0,0,0.12)"></div><div style="left:976px;top:741.13px;width:2px;height:41.530000000000086px;background:rgba(0,0,0,0.12)"></div><div style="left:976px;top:784.6600000000001px;width:2px;height:41.52999999999997px;background:rgba(0,0,0,0.12)"></div><div style="left:976px;top:828.19px;width:2px;height:41.52999999999997px;background:rgba(0,0,0,0.12)"></div><div style="left:976px;top:871.72px;width:2px;height:41.52999999999997px;background:rgba(0,0,0,0.12)"></div><div style="left:976px;top:915.25px;width:2px;height:41.52999999999997px;background:rgba(0,0,0,0.12)"></div><div style="left:976px;top:958.78px;width:2px;height:41.530000000000086px;background:rgba(0,0,0,0.12)"></div><div style="left:976px;top:1002.3100000000001px;width:2px;height:41.530000000000086px;background:rgba(0,0,0,0.12)"></div><div style="left:976px;top:1045.8400000000001px;width:2px;height:41.529999999999745px;background:rgba(0,0,0,0.12)"></div><div style="left:976px;top:1089.37px;width:2px;height:41.5300000000002px;background:rgba(0,0,0,0.12)"></div><div style="left:976px;top:1132.9px;width:2px;height:41.52999999999997px;background:rgba(0,0,0,0.12)"></div><div style="left:976px;top:1176.43px;width:2px;height:41.52999999999997px;background:rgba(0,0,0,0.12)"></div><div style="left:976px;top:1219.96px;width:2px;height:41.52999999999997px;background:rgba(0,0,0,0.12)"></div><div style="left:976px;top:1263.49px;width:2px;height:41.52999999999997px;background:rgba(0,0,0,0.12)"></div><div style="left:976px;top:1307.02px;width:2px;height:41.5300000000002px;background:rgba(0,0,0,0.12)"></div><div style="left:976px;top:1350.5500000000002px;width:2px;height:41.529999999999745px;background:rgba(0,0,0,0.12)"></div><div style="left:976px;top:1394.08px;width:2px;height:41.5300000000002px;background:rgba(0,0,0,0.12)"></div><div style="left:976px;top:1437.6100000000001px;width:2px;height:41.529999999999745px;background:rgba(0,0,0,0.12)"></div><div style="left:976px;top:1481.1399999999999px;width:2px;height:41.5300000000002px;background:rgba(0,0,0,0.12)"></div><div style="left:976px;top:1524.67px;width:2px;height:41.52999999999997px;background:rgba(0,0,0,0.12)"></div><div style="left:976px;top:1568.2px;width:2px;height:41.52999999999997px;background:rgba(0,0,0,0.12)"></div><div style="left:976px;top:1611.73px;width:2px;height:41.5300000000002px;background:rgba(0,0,0,0.12)"></div><div style="left:976px;top:1655.2600000000002px;width:2px;height:41.529999999999745px;background:rgba(0,0,0,0.12)"></div><div style="left:976px;top:1698.79px;width:2px;height:41.5300000000002px;background:rgba(0,0,0,0.12)"></div><div style="left:976px;top:1742.3200000000002px;width:2px;height:20.679999999999836px;background:rgba(0,0,0,0.12)"></div><div style="left:1340px;top:654px;width:2px;height:41.60000000000002px;background:rgba(0,0,0,0.12)"></div><div style="left:1340px;top:697.6px;width:2px;height:41.52999999999997px;background:rgba(0,0,0,0.12)"></div><div style="left:1340px;top:741.13px;width:2px;height:41.530000000000086px;background:rgba(0,0,0,0.12)"></div><div style="left:1340px;top:784.6600000000001px;width:2px;height:41.52999999999997px;background:rgba(0,0,0,0.12)"></div><div style="left:1340px;top:828.19px;width:2px;height:41.52999999999997px;background:rgba(0,0,0,0.12)"></div><div style="left:1340px;top:871.72px;width:2px;height:41.52999999999997px;background:rgba(0,0,0,0.12)"></div><div style="left:1340px;top:915.25px;width:2px;height:41.52999999999997px;background:rgba(0,0,0,0.12)"></div><div style="left:1340px;top:958.78px;width:2px;height:41.530000000000086px;background:rgba(0,0,0,0.12)"></div><div style="left:1340px;top:1002.3100000000001px;width:2px;height:41.530000000000086px;background:rgba(0,0,0,0.12)"></div><div style="left:1340px;top:1045.8400000000001px;width:2px;height:41.529999999999745px;background:rgba(0,0,0,0.12)"></div><div style="left:1340px;top:1089.37px;width:2px;height:41.5300000000002px;background:rgba(0,0,0,0.12)"></div><div style="left:1340px;top:1132.9px;width:2px;height:41.52999999999997px;background:rgba(0,0,0,0.12)"></div><div style="left:1340px;top:1176.43px;width:2px;height:41.52999999999997px;background:rgba(0,0,0,0.12)"></div><div style="left:1340px;top:1219.96px;width:2px;height:41.52999999999997px;background:rgba(0,0,0,0.12)"></div><div style="left:1340px;top:1263.49px;width:2px;height:41.52999999999997px;background:rgba(0,0,0,0.12)"></div><div style="left:1340px;top:1307.02px;width:2px;height:41.5300000000002px;background:rgba(0,0,0,0.12)"></div><div style="left:1340px;top:1350.5500000000002px;width:2px;height:41.529999999999745px;background:rgba(0,0,0,0.12)"></div><div style="left:1340px;top:1394.08px;width:2px;height:41.5300000000002px;background:rgba(0,0,0,0.12)"></div><div style="left:1340px;top:1437.6100000000001px;width:2px;height:41.529999999999745px;background:rgba(0,0,0,0.12)"></div><div style="left:1340px;top:1481.1399999999999px;width:2px;height:41.5300000000002px;background:rgba(0,0,0,0.12)"></div><div style="left:1340px;top:1524.67px;width:2px;height:41.52999999999997px;background:rgba(0,0,0,0.12)"></div><div style="left:1340px;top:1568.2px;width:2px;height:41.52999999999997px;background:rgba(0,0,0,0.12)"></div><div style="left:1340px;top:1611.73px;width:2px;height:41.5300000000002px;background:rgba(0,0,0,0.12)"></div><div style="left:1340px;top:1655.2600000000002px;width:2px;height:41.529999999999745px;background:rgba(0,0,0,0.12)"></div><div style="left:1340px;top:1698.79px;width:2px;height:41.5300000000002px;background:rgba(0,0,0,0.12)"></div><div style="left:1340px;top:1742.3200000000002px;width:2px;height:20.679999999999836px;background:rgba(0,0,0,0.12)"></div><div style="left:1620px;top:654px;width:2px;height:41.60000000000002px;background:rgba(0,0,0,0.12)"></div><div style="left:1620px;top:697.6px;width:2px;height:41.52999999999997px;background:rgba(0,0,0,0.12)"></div><div style="left:1620px;top:741.13px;width:2px;height:41.530000000000086px;background:rgba(0,0,0,0.12)"></div><div style="left:1620px;top:784.6600000000001px;width:2px;height:41.52999999999997px;background:rgba(0,0,0,0.12)"></div><div style="left:1620px;top:828.19px;width:2px;height:41.52999999999997px;background:rgba(0,0,0,0.12)"></div><div style="left:1620px;top:871.72px;width:2px;height:41.52999999999997px;background:rgba(0,0,0,0.12)"></div><div style="left:1620px;top:915.25px;width:2px;height:41.52999999999997px;background:rgba(0,0,0,0.12)"></div><div style="left:1620px;top:958.78px;width:2px;height:41.530000000000086px;background:rgba(0,0,0,0.12)"></div><div style="left:1620px;top:1002.3100000000001px;width:2px;height:41.530000000000086px;background:rgba(0,0,0,0.12)"></div><div style="left:1620px;top:1045.8400000000001px;width:2px;height:41.529999999999745px;background:rgba(0,0,0,0.12)"></div><div style="left:1620px;top:1089.37px;width:2px;height:41.5300000000002px;background:rgba(0,0,0,0.12)"></div><div style="left:1620px;top:1132.9px;width:2px;height:41.52999999999997px;background:rgba(0,0,0,0.12)"></div><div style="left:1620px;top:1176.43px;width:2px;height:41.52999999999997px;background:rgba(0,0,0,0.12)"></div><div style="left:1620px;top:1219.96px;width:2px;height:41.52999999999997px;background:rgba(0,0,0,0.12)"></div><div style="left:1620px;top:1263.49px;width:2px;height:41.52999999999997px;background:rgba(0,0,0,0.12)"></div><div style="left:1620px;top:1307.02px;width:2px;height:41.5300000000002px;background:rgba(0,0,0,0.12)"></div><div style="left:1620px;top:1350.5500000000002px;width:2px;height:41.529999999999745px;background:rgba(0,0,0,0.12)"></div><div style="left:1620px;top:1394.08px;width:2px;height:41.5300000000002px;background:rgba(0,0,0,0.12)"></div><div style="left:1620px;top:1437.6100000000001px;width:2px;height:41.529999999999745px;background:rgba(0,0,0,0.12)"></div><div style="left:1620px;top:1481.1399999999999px;width:2px;height:41.5300000000002px;background:rgba(0,0,0,0.12)"></div><div style="left:1620px;top:1524.67px;width:2px;height:41.52999999999997px;background:rgba(0,0,0,0.12)"></div><div style="left:1620px;top:1568.2px;width:2px;height:41.52999999999997px;background:rgba(0,0,0,0.12)"></div><div style="left:1620px;top:1611.73px;width:2px;height:41.5300000000002px;background:rgba(0,0,0,0.12)"></div><div style="left:1620px;top:1655.2600000000002px;width:2px;height:41.529999999999745px;background:rgba(0,0,0,0.12)"></div><div style="left:1620px;top:1698.79px;width:2px;height:41.5300000000002px;background:rgba(0,0,0,0.12)"></div><div style="left:1620px;top:1742.3200000000002px;width:2px;height:20.679999999999836px;background:rgba(0,0,0,0.12)"></div><div style="left:2086px;top:654px;width:2px;height:41.60000000000002px;background:rgba(0,0,0,0.12)"></div><div style="left:2086px;top:697.6px;width:2px;height:41.52999999999997px;background:rgba(0,0,0,0.12)"></div><div style="left:2086px;top:741.13px;width:2px;height:41.530000000000086px;background:rgba(0,0,0,0.12)"></div><div style="left:2086px;top:784.6600000000001px;width:2px;height:41.52999999999997px;background:rgba(0,0,0,0.12)"></div><div style="left:2086px;top:828.19px;width:2px;height:41.52999999999997px;background:rgba(0,0,0,0.12)"></div><div style="left:2086px;top:871.72px;width:2px;height:41.52999999999997px;background:rgba(0,0,0,0.12)"></div><div style="left:2086px;top:915.25px;width:2px;height:41.52999999999997px;background:rgba(0,0,0,0.12)"></div><div style="left:2086px;top:958.78px;width:2px;height:41.530000000000086px;background:rgba(0,0,0,0.12)"></div><div style="left:2086px;top:1002.3100000000001px;width:2px;height:41.530000000000086px;background:rgba(0,0,0,0.12)"></div><div style="left:2086px;top:1045.8400000000001px;width:2px;height:41.529999999999745px;background:rgba(0,0,0,0.12)"></div><div style="left:2086px;top:1089.37px;width:2px;height:41.5300000000002px;background:rgba(0,0,0,0.12)"></div><div style="left:2086px;top:1132.9px;width:2px;height:41.52999999999997px;background:rgba(0,0,0,0.12)"></div><div style="left:2086px;top:1176.43px;width:2px;height:41.52999999999997px;background:rgba(0,0,0,0.12)"></div><div style="left:2086px;top:1219.96px;width:2px;height:41.52999999999997px;background:rgba(0,0,0,0.12)"></div><div style="left:2086px;top:1263.49px;width:2px;height:41.52999999999997px;background:rgba(0,0,0,0.12)"></div><div style="left:2086px;top:1307.02px;width:2px;height:41.5300000000002px;background:rgba(0,0,0,0.12)"></div><div style="left:2086px;top:1350.5500000000002px;width:2px;height:41.529999999999745px;background:rgba(0,0,0,0.12)"></div><div style="left:2086px;top:1394.08px;width:2px;height:41.5300000000002px;background:rgba(0,0,0,0.12)"></div><div style="left:2086px;top:1437.6100000000001px;width:2px;height:41.529999999999745px;background:rgba(0,0,0,0.12)"></div><div style="left:2086px;top:1481.1399999999999px;width:2px;height:41.5300000000002px;background:rgba(0,0,0,0.12)"></div><div style="left:2086px;top:1524.67px;width:2px;height:41.52999999999997px;background:rgba(0,0,0,0.12)"></div><div style="left:2086px;top:1568.2px;width:2px;height:41.52999999999997px;background:rgba(0,0,0,0.12)"></div><div style="left:2086px;top:1611.73px;width:2px;height:41.5300000000002px;background:rgba(0,0,0,0.12)"></div><div style="left:2086px;top:1655.2600000000002px;width:2px;height:41.529999999999745px;background:rgba(0,0,0,0.12)"></div><div style="left:2086px;top:1698.79px;width:2px;height:41.5300000000002px;background:rgba(0,0,0,0.12)"></div><div style="left:2086px;top:1742.3200000000002px;width:2px;height:20.679999999999836px;background:rgba(0,0,0,0.12)"></div><div style="left:2295px;top:654px;width:2px;height:41.60000000000002px;background:rgba(0,0,0,0.12)"></div><div style="left:2295px;top:697.6px;width:2px;height:41.52999999999997px;background:rgba(0,0,0,0.12)"></div><div style="left:2295px;top:741.13px;width:2px;height:41.530000000000086px;background:rgba(0,0,0,0.12)"></div><div style="left:2295px;top:784.6600000000001px;width:2px;height:41.52999999999997px;background:rgba(0,0,0,0.12)"></div><div style="left:2295px;top:828.19px;width:2px;height:41.52999999999997px;background:rgba(0,0,0,0.12)"></div><div style="left:2295px;top:871.72px;width:2px;height:41.52999999999997px;background:rgba(0,0,0,0.12)"></div><div style="left:2295px;top:915.25px;width:2px;height:41.52999999999997px;background:rgba(0,0,0,0.12)"></div><div style="left:2295px;top:958.78px;width:2px;height:41.530000000000086px;background:rgba(0,0,0,0.12)"></div><div style="left:2295px;top:1002.3100000000001px;width:2px;height:41.530000000000086px;background:rgba(0,0,0,0.12)"></div><div style="left:2295px;top:1045.8400000000001px;width:2px;height:41.529999999999745px;background:rgba(0,0,0,0.12)"></div><div style="left:2295px;top:1089.37px;width:2px;height:41.5300000000002px;background:rgba(0,0,0,0.12)"></div><div style="left:2295px;top:1132.9px;width:2px;height:41.52999999999997px;background:rgba(0,0,0,0.12)"></div><div style="left:2295px;top:1176.43px;width:2px;height:41.52999999999997px;background:rgba(0,0,0,0.12)"></div><div style="left:2295px;top:1219.96px;width:2px;height:41.52999999999997px;background:rgba(0,0,0,0.12)"></div><div style="left:2295px;top:1263.49px;width:2px;height:41.52999999999997px;background:rgba(0,0,0,0.12)"></div><div style="left:2295px;top:1307.02px;width:2px;height:41.5300000000002px;background:rgba(0,0,0,0.12)"></div><div style="left:2295px;top:1350.5500000000002px;width:2px;height:41.529999999999745px;background:rgba(0,0,0,0.12)"></div><div style="left:2295px;top:1394.08px;width:2px;height:41.5300000000002px;background:rgba(0,0,0,0.12)"></div><div style="left:2295px;top:1437.6100000000001px;width:2px;height:41.529999999999745px;background:rgba(0,0,0,0.12)"></div><div style="left:2295px;top:1481.1399999999999px;width:2px;height:41.5300000000002px;background:rgba(0,0,0,0.12)"></div><div style="left:2295px;top:1524.67px;width:2px;height:41.52999999999997px;background:rgba(0,0,0,0.12)"></div><div style="left:2295px;top:1568.2px;width:2px;height:41.52999999999997px;background:rgba(0,0,0,0.12)"></div><div style="left:2295px;top:1611.73px;width:2px;height:41.5300000000002px;background:rgba(0,0,0,0.12)"></div><div style="left:2295px;top:1655.2600000000002px;width:2px;height:41.529999999999745px;background:rgba(0,0,0,0.12)"></div><div style="left:2295px;top:1698.79px;width:2px;height:41.5300000000002px;background:rgba(0,0,0,0.12)"></div><div style="left:2295px;top:1742.3200000000002px;width:2px;height:20.679999999999836px;background:rgba(0,0,0,0.12)"></div><div class="t" style="left:4.80px;top:660.33px;font-size:27.64px;line-height:31.79px;color:#000;font-weight:bold">Seed Ideas</div><div class="t" style="left:4.80px;top:921.51px;font-size:27.64px;line-height:31.79px;color:#000;font-weight:bold">Wikipedia Table of Contents</div><div class="t" style="left:4.80px;top:1182.69px;font-size:27.64px;line-height:31.79px;color:#000;font-weight:bold">Google's "Searches Related To"</div><div class="t" style="left:4.80px;top:1443.87px;font-size:27.64px;line-height:31.79px;color:#000;font-weight:bold">Reddit and Forums</div><div class="t" style="left:4.80px;top:1705.05px;font-size:27.64px;line-height:31.79px;color:#000;font-weight:bold">Google Suggest</div><div class="t" style="left:433.00px;top:660.33px;font-size:27.64px;line-height:31.79px;color:#000;font-style:italic">dog show</div><div class="t" style="right:1166.00px;top:660.33px;font-size:27.64px;line-height:31.79px;text-align:right;color:#000;font-style:italic">5400</div><div class="t" style="right:886.00px;top:660.33px;font-size:27.64px;line-height:31.79px;text-align:right;color:#000;font-style:italic">$0.81</div><div class="t" style="right:420.00px;top:660.33px;font-size:27.64px;line-height:31.79px;text-align:right;color:#000;font-style:italic">38</div><div class="t" style="left:2094.00px;top:660.33px;font-size:27.64px;line-height:31.79px;color:#000;font-style:italic">Medium</div><div class="t" style="left:2303.00px;top:660.33px;font-size:27.64px;line-height:31.79px;color:#000;font-style:italic">Flat</div><div class="t" style="left:433.00px;top:703.86px;font-size:27.64px;line-height:31.79px;color:#000;font-style:italic">westminster dog show</div><div class="t" style="right:1166.00px;top:703.86px;font-size:27.64px;line-height:31.79px;text-align:right;color:#000;font-style:italic">260</div><div class="t" style="right:886.00px;top:703.86px;font-size:27.64px;line-height:31.79px;text-align:right;color:#000;font-style:italic">$3.08</div><div class="t" style="right:420.00px;top:703.86px;font-size:27.64px;line-height:31.79px;text-align:right;color:#000;font-style:italic">31</div><div class="t" style="left:2094.00px;top:703.86px;font-size:27.64px;line-height:31.79px;color:#000;font-style:italic">High</div><div class="t" style="left:2303.00px;top:703.86px;font-size:27.64px;line-height:31.79px;color:#000;font-style:italic">Slowly Growing</div><div class="t" style="left:433.00px;top:921.51px;font-size:27.64px;line-height:31.79px;color:#000;font-style:italic">westminster dog show requirements 2020</div><div class="t" style="right:1166.00px;top:921.51px;font-size:27.64px;line-height:31.79px;text-align:right;color:#000;font-style:italic">90</div><div class="t" style="right:886.00px;top:921.51px;font-size:27.64px;line-height:31.79px;text-align:right;color:#000;font-style:italic">$1.66</div><div class="t" style="right:420.00px;top:921.51px;font-size:27.64px;line-height:31.79px;text-align:right;color:#000;font-style:italic">25</div><div class="t" style="left:2094.00px;top:921.51px;font-size:27.64px;line-height:31.79px;color:#000;font-style:italic">High</div><div class="t" style="left:2303.00px;top:921.51px;font-size:27.64px;line-height:31.79px;color:#000;font-style:italic">Growing</div><div class="t" style="left:433.00px;top:965.04px;font-size:27.64px;line-height:31.79px;color:#000;font-style:italic">westminster dog show winners</div><div class="t" style="right:1166.00px;top:965.04px;font-size:27.64px;line-height:31.79px;text-align:right;color:#000;font-style:italic">140</div><div class="t" style="right:886.00px;top:965.04px;font-size:27.64px;line-height:31.79px;text-align:right;color:#000;font-style:italic">$1.07</div><div class="t" style="right:420.00px;top:965.04px;font-size:27.64px;line-height:31.79px;text-align:right;color:#000;font-style:italic">21</div><div class="t" style="left:2094.00px;top:965.04px;font-size:27.64px;line-height:31.79px;color:#000;font-style:italic">Medium</div><div class="t" style="left:2303.00px;top:965.04px;font-size:27.64px;line-height:31.79px;color:#000;font-style:italic">Slowly Declining</div><div style="left:0px;top:341.5px;width:978px;height:4.3px;background:#1a6ef3"></div><div style="left:0px;top:503px;width:978px;height:4px;background:#1a6ef3"></div><div style="left:0px;top:341.5px;width:1.2px;height:165.5px;background:#1a6ef3"></div><div style="left:974px;top:341.5px;width:4px;height:165.5px;background:#1a6ef3"></div><div style="left:968px;top:497.3px;width:16px;height:16px;border:2px solid #fff;border-radius:50%;background:#1a6ef3"></div><div style="left:0;top:1480px;width:2500px;height:283px;background:linear-gradient(to bottom, rgba(242,243,248,0) 0%, rgba(242,243,248,0.15) 23%, rgba(242,243,248,0.33) 38.9%, rgba(242,243,248,0.56) 53.7%, rgba(242,243,248,0.77) 68.9%, rgba(242,243,248,0.9) 84.8%, rgba(243,244,248,0.98) 100%)"></div>
</body></html>
